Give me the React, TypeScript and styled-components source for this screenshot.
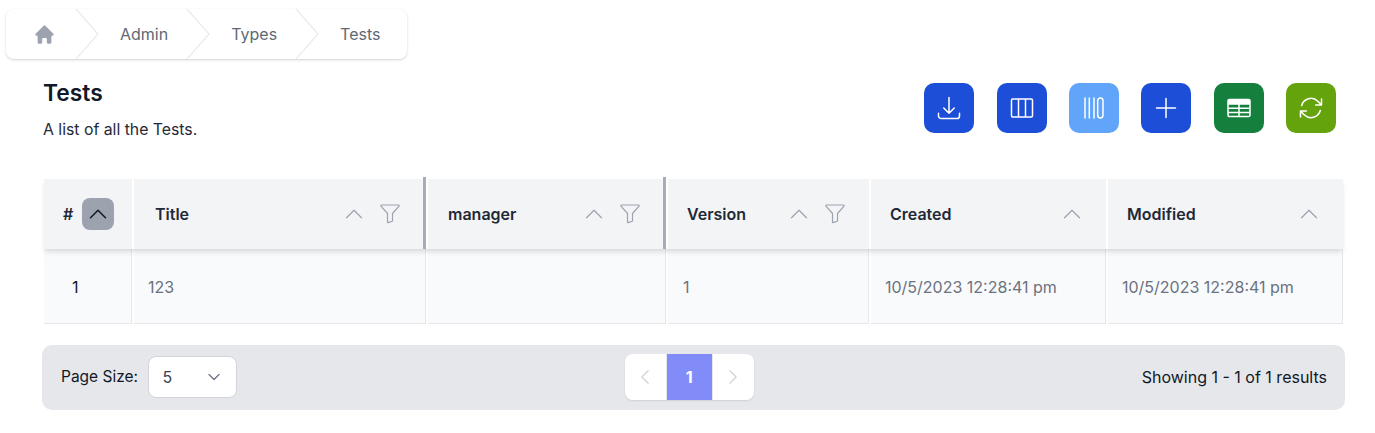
import styled, { createGlobalStyle } from 'styled-components'

const COLUMNS = [
  { key: 'title', label: 'Title', filter: true, resizable: true, inset: 21, trail: 24 },
  { key: 'manager', label: 'manager', filter: true, resizable: true, inset: 20, trail: 24 },
  { key: 'version', label: 'Version', filter: true, resizable: false, inset: 19, trail: 22 },
  { key: 'created', label: 'Created', filter: false, resizable: false, inset: 19, trail: 22 },
  { key: 'modified', label: 'Modified', filter: false, resizable: false, inset: 19, trail: 22 },
]

const ROW = [
  { key: 'title', value: '123' },
  { key: 'manager', value: '' },
  { key: 'version', value: '1' },
  { key: 'created', value: '10/5/2023 12:28:41 pm' },
  { key: 'modified', value: '10/5/2023 12:28:41 pm' },
]

const CRUMBS = ['Admin', 'Types', 'Tests']

function Separator() {
  return (
    <CrumbSeparator viewBox="0 0 24 44" preserveAspectRatio="none" fill="currentColor">
      <path d="M.293 0l22 22-22 22h1.414l22-22-22-22H.293z" />
    </CrumbSeparator>
  )
}

function Outline({ d, size = 24, width = 1.5 }: { d: string; size?: number; width?: number }) {
  return (
    <svg
      width={size}
      height={size}
      viewBox="0 0 24 24"
      fill="none"
      stroke="currentColor"
      strokeWidth={width}
      strokeLinecap="round"
      strokeLinejoin="round"
    >
      <path d={d} />
    </svg>
  )
}

const CHEVRON_UP = 'M4.5 15.75l7.5-7.5 7.5 7.5'
const FUNNEL =
  'M3.5 3h17c.6 0 .9.7.5 1.1l-6.5 7.4v7.2c0 .3-.2.5-.4.6l-4 1.3c-.4.1-.6-.1-.6-.5v-8.6L3 4.1C2.6 3.7 2.9 3 3.5 3z'

export default function App() {
  return (
    <>
      <GlobalStyle />
      <Breadcrumb>
        <HomeIcon viewBox="0 0 20 20" fill="currentColor">
          <path d="M9.293 2.293a1 1 0 011.414 0l7 7A1 1 0 0117 11h-1v6a1 1 0 01-1 1h-2a1 1 0 01-1-1v-3a1 1 0 00-1-1H9a1 1 0 00-1 1v3a1 1 0 01-1 1H5a1 1 0 01-1-1v-6H3a1 1 0 01-.707-1.707l7-7z" />
        </HomeIcon>
        {CRUMBS.map((crumb) => (
          <Crumb key={crumb}>
            <Separator />
            <CrumbLabel>{crumb}</CrumbLabel>
          </Crumb>
        ))}
      </Breadcrumb>

      <Page>
        <TitleBar>
          <div>
            <Heading>Tests</Heading>
            <Subheading>A list of all the Tests.</Subheading>
          </div>
          <Actions>
            <ActionButton $bg="#1d4ed8">
              <Outline d="M3 16.5v2.25A2.25 2.25 0 005.25 21h13.5A2.25 2.25 0 0021 18.75V16.5M16.5 12L12 16.5m0 0L7.5 12m4.5 4.5V3" size={28} width={1.3} />
            </ActionButton>
            <ActionButton $bg="#1d4ed8">
              <Outline d="M8.5 3v18M15.5 3v18M2.7 3h18.6c.7 0 1.2.5 1.2 1.2v15.6c0 .7-.5 1.2-1.2 1.2H2.7c-.7 0-1.2-.5-1.2-1.2V4.2c0-.7.5-1.2 1.2-1.2z" />
            </ActionButton>
            <ActionButton $bg="#60a5fa">
              <Outline d="M3 2v20M7.3 2v20M12 2v20M18.35 2c1.5 0 2.65 1.2 2.65 2.7v14.6c0 1.5-1.15 2.7-2.65 2.7s-2.65-1.2-2.65-2.7V4.7c0-1.5 1.15-2.7 2.65-2.7z" />
            </ActionButton>
            <ActionButton $bg="#1d4ed8">
              <Outline d="M12 2.5v19M2.5 12h19" />
            </ActionButton>
            <ActionButton $bg="#15803d">
              <Outline d="M2.2 3.5h19.6c.6 0 1.2.5 1.2 1.2v14.6c0 .7-.6 1.2-1.2 1.2H2.2c-.6 0-1.2-.5-1.2-1.2V4.7c0-.7.6-1.2 1.2-1.2zM1 5h22M1 6.5h22M1 8h22M1 12.2h22M1 16.4h22M12 8v12.5" />
            </ActionButton>
            <ActionButton $bg="#65a30d">
              <Outline d="M16.023 9.348h4.992v-.001M2.985 19.644v-4.992m0 0h4.992m-4.993 0l3.181 3.183a8.25 8.25 0 0013.803-3.7M4.031 9.865a8.25 8.25 0 0113.803-3.7l3.181 3.182m0-4.991v4.99" size={28} width={1.3} />
            </ActionButton>
          </Actions>
        </TitleBar>

        <Table>
          <HeaderRow>
            <HeaderCell $inset={19} $trail={23}>
              <HeaderLabel>#</HeaderLabel>
              <ActiveSort>
                <Outline d={CHEVRON_UP} />
              </ActiveSort>
            </HeaderCell>
            {COLUMNS.map((col) => (
              <HeaderCell key={col.key} $inset={col.inset} $trail={col.trail} $resizable={col.resizable}>
                <HeaderLabel>{col.label}</HeaderLabel>
                <HeaderTools>
                  <Outline d={CHEVRON_UP} width={1.2} />
                  {col.filter && <Outline d={FUNNEL} width={1.2} />}
                </HeaderTools>
              </HeaderCell>
            ))}
          </HeaderRow>
          <BodyRow>
            <IndexCell>1</IndexCell>
            {ROW.map((cell) => (
              <BodyCell key={cell.key} $inset={cell.key === 'version' ? 15 : 14}>
                {cell.value}
              </BodyCell>
            ))}
          </BodyRow>
        </Table>

        <PagerBar>
          <PageSize>
            Page Size:
            <SizeSelect>
              5
              <Outline d="M19.5 8.25l-7.5 7.5-7.5-7.5" size={16} width={1.9} />
            </SizeSelect>
          </PageSize>
          <Pagination>
            <PageArrow>
              <Outline d="M15.75 19.5L8.25 12l7.5-7.5" size={20} />
            </PageArrow>
            <CurrentPage>1</CurrentPage>
            <PageArrow>
              <Outline d="M8.25 4.5l7.5 7.5-7.5 7.5" size={20} />
            </PageArrow>
          </Pagination>
          <Summary>Showing 1 - 1 of 1 results</Summary>
        </PagerBar>
      </Page>
    </>
  )
}

const GlobalStyle = createGlobalStyle`
  html, body {
    margin: 0;
    padding: 0;
    background: #fff;
  }
  body {
    width: 1375px;
    height: 433px;
    overflow: hidden;
    font-family: Inter, "Noto Sans", sans-serif;
    font-size: 16px;
    color: #111827;
  }
`

const Breadcrumb = styled.nav`
  display: inline-flex;
  box-sizing: border-box;
  height: 50px;
  margin: 9px 0 0 6px;
  padding: 0 27px;
  align-items: stretch;
  gap: 18px;
  vertical-align: top;
  background: #fff;
  border-radius: 8px;
  box-shadow: 0 1px 3px rgba(0, 0, 0, 0.12), 0 1px 2px rgba(0, 0, 0, 0.06);
`

const HomeIcon = styled.svg`
  width: 23px;
  height: 23px;
  margin-right: 1px;
  align-self: center;
  color: #9ca3af;
`

const Crumb = styled.div`
  display: flex;
  align-items: center;
  gap: 21px;
`

const CrumbSeparator = styled.svg`
  width: 24px;
  height: 50px;
  flex-shrink: 0;
  color: #e5e7eb;
`

const CrumbLabel = styled.span`
  font-size: 16px;
  color: #5f6875;
`

const Page = styled.main`
  display: flex;
  flex-direction: column;
  padding: 0 30px 0 43px;
`

const TitleBar = styled.header`
  display: flex;
  justify-content: space-between;
  align-items: flex-start;
  height: 120px;
  padding: 24px 8.8px 0 0;
  box-sizing: border-box;
`

const Heading = styled.h1`
  margin: 0;
  font-size: 22.8px;
  line-height: 20px;
  font-weight: 600;
  color: #111827;
`

const Subheading = styled.p`
  margin: 17px 0 0;
  font-size: 15.8px;
  line-height: 20px;
  color: #1f2937;
`

const Actions = styled.div`
  display: flex;
  gap: 22.4px;
`

const ActionButton = styled.button<{ $bg: string }>`
  display: flex;
  align-items: center;
  justify-content: center;
  width: 50px;
  height: 50px;
  padding: 0;
  border: 0;
  border-radius: 10px;
  background: ${(p) => p.$bg};
  color: #fff;
`

const COLUMN_TRACKS = '88px 292px 238px 201px 235px 235px'

const Table = styled.section`
  display: flex;
  flex-direction: column;
  margin-left: 1px;
  width: 1299px;
`

const HeaderRow = styled.div`
  position: relative;
  z-index: 1;
  display: grid;
  grid-template-columns: ${COLUMN_TRACKS};
  gap: 2px;
  height: 70px;
  box-shadow: 0 4px 6px -1px rgba(0, 0, 0, 0.1), 0 2px 4px -1px rgba(0, 0, 0, 0.06);
`

const HeaderCell = styled.div<{ $inset: number; $trail: number; $resizable?: boolean }>`
  position: relative;
  display: flex;
  align-items: center;
  justify-content: space-between;
  padding: 0 ${(p) => p.$trail}px 0 ${(p) => p.$inset}px;
  background: #f3f4f6;

  ${(p) =>
    p.$resizable &&
    `
    &::after {
      content: '';
      position: absolute;
      top: -2px;
      bottom: 0;
      right: 0;
      width: 3px;
      background: #a6acb7;
    }
  `}
`

const HeaderLabel = styled.span`
  font-size: 16px;
  font-weight: 600;
  color: #1f2937;
`

const HeaderTools = styled.div`
  display: flex;
  align-items: center;
  gap: 12px;
  color: #9ca3af;
`

const ActiveSort = styled.div`
  display: flex;
  align-items: center;
  justify-content: center;
  width: 32px;
  height: 32px;
  margin-right: -5px;
  border-radius: 8px;
  background: #9ca3af;
  color: #111827;
`

const BodyRow = styled.div`
  display: grid;
  grid-template-columns: ${COLUMN_TRACKS};
  gap: 2px;
  height: 75px;
`

const BodyCell = styled.div<{ $inset: number }>`
  display: flex;
  align-items: center;
  box-sizing: border-box;
  padding: 1px 0 0 ${(p) => p.$inset}px;
  font-size: 16px;
  color: #6b7280;
  background: #f9fafb;
  border-right: 1px solid #e5e7eb;
  border-bottom: 1px solid #e5e7eb;
`

const IndexCell = styled(BodyCell).attrs({ $inset: 28 })`
  color: #111827;
`

const PagerBar = styled.footer`
  display: flex;
  align-items: center;
  justify-content: space-between;
  box-sizing: border-box;
  width: 1303px;
  height: 65px;
  margin: 21px 0 0 -1px;
  padding: 0 18px 2px 19px;
  border-radius: 10px;
  background: #e5e7eb;
`

const PageSize = styled.div`
  display: flex;
  align-items: center;
  gap: 9.5px;
  font-size: 15.5px;
  color: #111827;
`

const SizeSelect = styled.div`
  display: flex;
  align-items: center;
  justify-content: space-between;
  box-sizing: border-box;
  width: 89px;
  height: 42px;
  padding: 0 14px;
  border: 1px solid #d1d5db;
  border-radius: 8px;
  background: #fff;
  font-size: 16px;
  color: #374151;

  svg {
    color: #6b7280;
  }
`

const Pagination = styled.nav`
  display: flex;
  align-items: stretch;
  gap: 1px;
  width: 129px;
  height: 46px;
  margin-top: 1px;
  border-radius: 8px;
  overflow: hidden;
  background: #e5e7eb;
  box-shadow: 0 1px 2px rgba(0, 0, 0, 0.1);
`

const PageArrow = styled.div`
  display: flex;
  flex: 1;
  align-items: center;
  justify-content: center;
  background: #fff;
  color: #d1d5db;
`

const CurrentPage = styled.div`
  display: flex;
  align-items: center;
  justify-content: center;
  width: 45px;
  background: #818cf8;
  color: #fff;
  font-size: 16px;
  font-weight: 700;
`

const Summary = styled.div`
  font-size: 16px;
  color: #111827;
`
